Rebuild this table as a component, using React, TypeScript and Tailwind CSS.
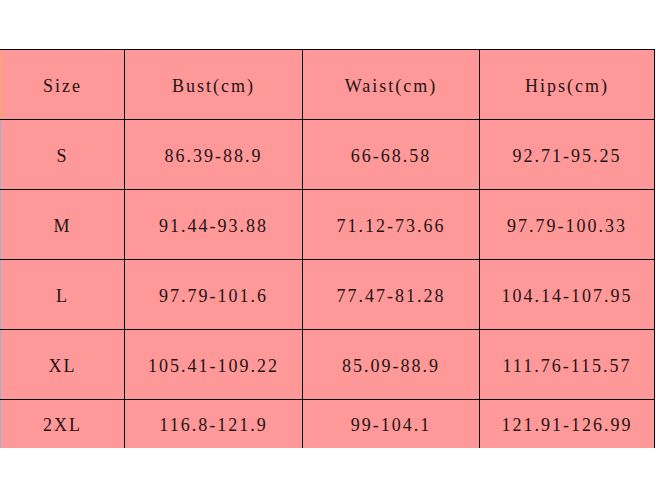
const header = ["Size", "Bust(cm)", "Waist(cm)", "Hips(cm)"];

const rows = [
  ["S", "86.39-88.9", "66-68.58", "92.71-95.25"],
  ["M", "91.44-93.88", "71.12-73.66", "97.79-100.33"],
  ["L", "97.79-101.6", "77.47-81.28", "104.14-107.95"],
  ["XL", "105.41-109.22", "85.09-88.9", "111.76-115.57"],
  ["2XL", "116.8-121.9", "99-104.1", "121.91-126.99"],
];

function Row({ cells, head, last }: { cells: string[]; head?: boolean; last?: boolean }) {
  return (
    <div className={`flex border-t border-black ${last ? "h-[49px]" : "h-[70px]"}`}>
      <div
        className={`w-[125px] flex items-center justify-center pt-[3px] border-l border-r border-black ${
          head ? "border-l-[#f2b25c]" : "border-l-[#9fb0c8]"
        }`}
      >
        {cells[0]}
      </div>
      <div className="w-[178px] flex items-center justify-center pt-[3px] border-r border-black">
        {cells[1]}
      </div>
      <div className="w-[177px] flex items-center justify-center pt-[3px] border-r border-black">
        {cells[2]}
      </div>
      <div className="w-[175px] flex items-center justify-center pt-[3px] border-r border-black">
        {cells[3]}
      </div>
    </div>
  );
}

export default function App() {
  return (
    <div className="w-[656px] h-[500px] bg-white pt-[49px]">
      <div
        className="w-[655px] bg-[#ff9999] text-[#1f1414] text-[18px] tracking-[2px]"
        style={{ fontFamily: '"Liberation Serif", "Noto Sans CJK SC", serif' }}
      >
        <Row cells={header} head />
        {rows.map((r, i) => (
          <Row key={r[0]} cells={r} last={i === rows.length - 1} />
        ))}
      </div>
    </div>
  );
}
